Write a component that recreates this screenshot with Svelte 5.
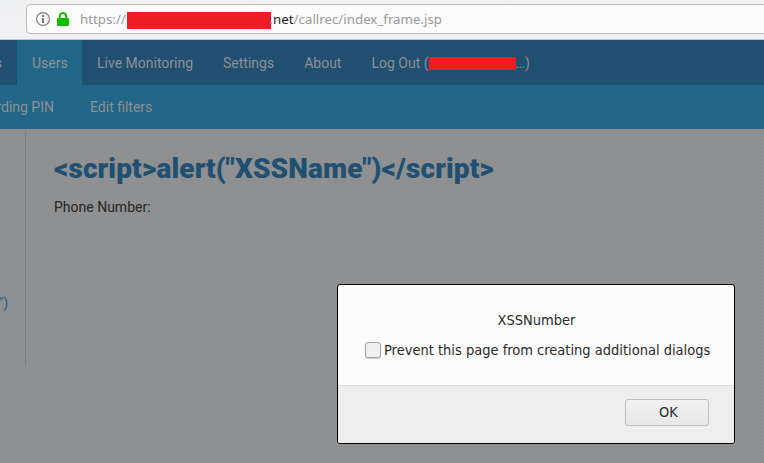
<script>
  const items = ['Live Monitoring', 'Settings', 'About'];
</script>

<div class="window">
  <header class="toolbar">
    <div class="address">
      <svg class="info" viewBox="0 0 14 14" width="14" height="14">
        <circle cx="7" cy="7" r="6.4" fill="none" stroke="#777" stroke-width="1.1" />
        <rect x="6" y="3" width="2" height="2" fill="#777" />
        <rect x="6" y="6" width="2" height="5" fill="#777" />
      </svg>
      <svg class="lock" viewBox="0 0 12 14" width="12" height="14">
        <path d="M2.8 7V4.2a3.2 3.2 0 0 1 6.4 0V7" fill="none" stroke="#12bc00" stroke-width="2" />
        <rect x="0" y="6" width="12" height="8" rx="1" fill="#12bc00" />
      </svg>
      <span class="scheme">https://</span><span class="redacted host"></span><span class="domain"><i>.</i>net</span><span class="path">/callrec/index_frame.jsp</span>
    </div>
  </header>

  <main>
    <nav class="primary">
      <span class="clipped">s</span>
      <span class="active">Users</span>
      {#each items as item}
        <span>{item}</span>
      {/each}
      <span class="logout">Log Out (<b class="redacted account"></b>…)</span>
    </nav>
    <nav class="secondary">
      <span class="pin">rding PIN</span>
      <span>Edit filters</span>
    </nav>
    <div class="body">
      <aside><span>")</span></aside>
      <section>
        <h1>{'<script>alert("XSSName")</' + 'script>'}</h1>
        <p>Phone Number:</p>
      </section>
    </div>
    <div class="dialog">
      <div class="message">
        <div class="title">XSSNumber</div>
        <div class="check"><span class="box"></span><span class="label">Prevent this page from creating additional dialogs</span></div>
      </div>
      <div class="actions"><button>OK</button></div>
    </div>
  </main>
</div>

<style>
  :global(body) { overflow: hidden; }
  * { box-sizing: border-box; }
  .window { width: 764px; height: 463px; overflow: hidden; display: flex; flex-direction: column; }
  .toolbar { height: 40px; flex: none; padding: 4px 0 0 26px; background: linear-gradient(#eff0f2, #f2f2f5); border-bottom: 1px solid #c4c6c9; }
  .address { height: 30px; width: 760px; display: flex; align-items: center; border: 1px solid #b9babc; border-radius: 4px; background: #fcfcfc; padding-left: 9px; font: 13.3px/28px "Noto Sans", sans-serif; color: #999; white-space: pre; }
  .info, .lock { flex: none; }
  .lock { margin: 0 11px 0 7px; }
  .scheme { width: 47px; }
  .redacted { background: #ee1c25; flex: none; }
  .host { width: 144px; height: 17px; margin-top: 3px; }
  .domain { color: #222; }
  .domain i { font-style: normal; color: #999; margin-left: -1.5px; }
  main { position: relative; flex: 1; background: #919293; font: 14px/20px Roboto, sans-serif; }
  main::after { content: ""; position: absolute; inset: 0; pointer-events: none; background-image: radial-gradient(circle, rgba(30, 50, 75, .05) 0 .8px, transparent .9px), radial-gradient(circle, rgba(30, 50, 75, .05) 0 .8px, transparent .9px); background-size: 4px 4px; background-position: 0 0, 2px 2px; }
  nav { display: flex; color: #919394; white-space: pre; overflow: hidden; }
  nav > span { flex: none; }
  .primary { height: 45px; background: #205072; line-height: 46px; }
  .primary > span { padding: 0 15px; }
  .primary > .clipped { width: 17px; padding: 0 15px 0 0; display: flex; justify-content: flex-end; }
  .primary > .active { background: #21678a; width: 65px; }
  .primary > .logout { padding-right: 0; }
  .redacted.account { position: relative; z-index: 1; display: inline-block; width: 87px; height: 13px; vertical-align: -2px; }
  .secondary { height: 44px; background: #21678a; line-height: 44px; }
  .secondary .pin { width: 54px; margin-right: 36px; display: flex; justify-content: flex-end; }
  .body { display: flex; padding-top: 2px; }
  aside { width: 26px; height: 235px; border-right: 1px solid #7c7f82; color: #21678a; padding-top: 162px; }
  aside span { display: flex; justify-content: flex-end; width: 8px; }
  section { padding: 20px 0 0 28px; }
  h1 { margin: 0; font-size: 28px; line-height: 36px; font-weight: 900; letter-spacing: .14px; color: #205072; white-space: pre; }
  p { margin: 10px 0 0; color: #252525; }
  .dialog { position: absolute; z-index: 1; left: 337px; top: 244px; width: 398px; height: 160px; border: 1px solid #000; border-radius: 3px; background: #fcfcfc; overflow: hidden; font: 14.5px/20px "DejaVu Sans Condensed", "DejaVu Sans", sans-serif; color: #2a2a2a; display: flex; flex-direction: column; }
  .message { height: 100px; padding-top: 25px; }
  .title { text-align: center; padding-left: 1px; }
  .check { display: flex; align-items: center; padding-left: 27px; margin-top: 10px; white-space: pre; }
  .box { width: 16px; height: 16px; flex: none; border: 1px solid #a1a3a3; border-radius: 3px; background: #eff0f1; margin-right: 3px; box-shadow: 0 1px 1px #ccc; }
  .actions { flex: 1; background: #eee; border-top: 1px solid #ddd; display: flex; justify-content: flex-end; padding: 13px 25px 0 0; }
  button { width: 84px; height: 27px; border: 1px solid #bdbfc1; border-radius: 3px; background: linear-gradient(#f1f1f2, #e7e8e9); font: inherit; color: inherit; padding: 0 0 1px 3px; }
</style>
